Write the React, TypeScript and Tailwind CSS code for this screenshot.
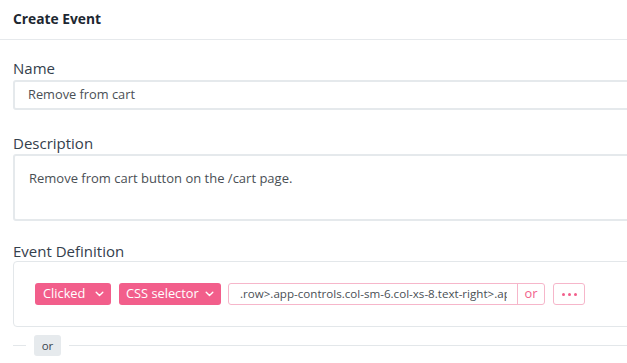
import React from "react";

const Chevron = () => (
  <svg width="9" height="6" viewBox="0 0 9 6" fill="none">
    <path d="M1.2 1.2l3.3 3.3 3.3-3.3" stroke="white" strokeWidth="1.4" strokeLinecap="round" strokeLinejoin="round" />
  </svg>
);

export default function App() {
  return (
    <div className="w-[627px] h-[363px] overflow-hidden bg-white" style={{ fontFamily: "'Open Sans', Lato, sans-serif" }}>
      <div className="h-[39px] flex items-center px-[13px] border-b border-[#e6e9ec] box-content">
        <span className="text-[13.8px] font-bold text-[#1d2731]">Create Event</span>
      </div>
      <div className="pl-[13px]">
        <div className="mt-[18px] h-[20px] leading-[20px] text-[15px] text-[#34404c]">Name</div>
        <div className="mt-[2px] h-[30px] w-[640px] border-2 border-[#e5e9ec] rounded-[3px] flex items-center pl-[13px] text-[12.8px] text-[#4a4f55]">
          Remove from cart
        </div>
        <div className="mt-[23px] h-[20px] leading-[20px] text-[15px] text-[#34404c]">Description</div>
        <div className="mt-[1px] h-[67px] w-[640px] border-2 border-[#e5e9ec] rounded-[3px] pl-[14px] pt-[13px] text-[13px] leading-[18px] text-[#4a4f55]">
          Remove from cart button on the /cart page.
        </div>
        <div className="mt-[20px] h-[20px] leading-[20px] text-[15px] text-[#34404c]">Event Definition</div>
        <div className="h-[66px] w-[640px] border border-[#e3e7ea] rounded-[4px] flex items-center pl-[21px] gap-[8px]">
          <div className="h-[22px] w-[76px] bg-[#f25e8b] rounded-[3px] flex items-center justify-between pl-[8px] pr-[7px] text-white text-[12.8px]">
            <span>Clicked</span>
            <Chevron />
          </div>
          <div className="h-[22px] w-[102px] bg-[#f25e8b] rounded-[3px] flex items-center justify-between pl-[7px] pr-[7px] text-white text-[12.8px]">
            <span>CSS selector</span>
            <Chevron />
          </div>
          <div className="h-[22px] flex border border-[#f6b6ca] rounded-[3px] -ml-[1px]">
            <div className="w-[288px] flex items-center pl-[11px] pr-[10px]">
              <div className="flex-1 overflow-hidden whitespace-nowrap text-[11.6px] text-[#4a4f55]">
                .row&gt;.app-controls.col-sm-6.col-xs-8.text-right&gt;.app-button
              </div>
            </div>
            <div className="w-[27px] border-l border-[#f6b6ca] flex items-center justify-center text-[12.8px] text-[#f25e8b]">or</div>
          </div>
          <div className="h-[22px] w-[32px] border border-[#f6b6ca] rounded-[3px] flex items-center justify-center gap-[3px]">
            <span className="w-[3px] h-[3px] rounded-full bg-[#f25e8b]" />
            <span className="w-[3px] h-[3px] rounded-full bg-[#f25e8b]" />
            <span className="w-[3px] h-[3px] rounded-full bg-[#f25e8b]" />
          </div>
        </div>
        <div className="mt-[8px] flex items-center">
          <div className="w-[13px] h-[1px] bg-[#e3e7ea]" />
          <div className="mx-[8px] h-[21px] w-[27px] bg-[#e6eaed] rounded-[3px] flex items-center justify-center text-[11.5px] text-[#3b4550]">or</div>
          <div className="flex-1 h-[1px] bg-[#e3e7ea]" />
        </div>
      </div>
    </div>
  );
}
